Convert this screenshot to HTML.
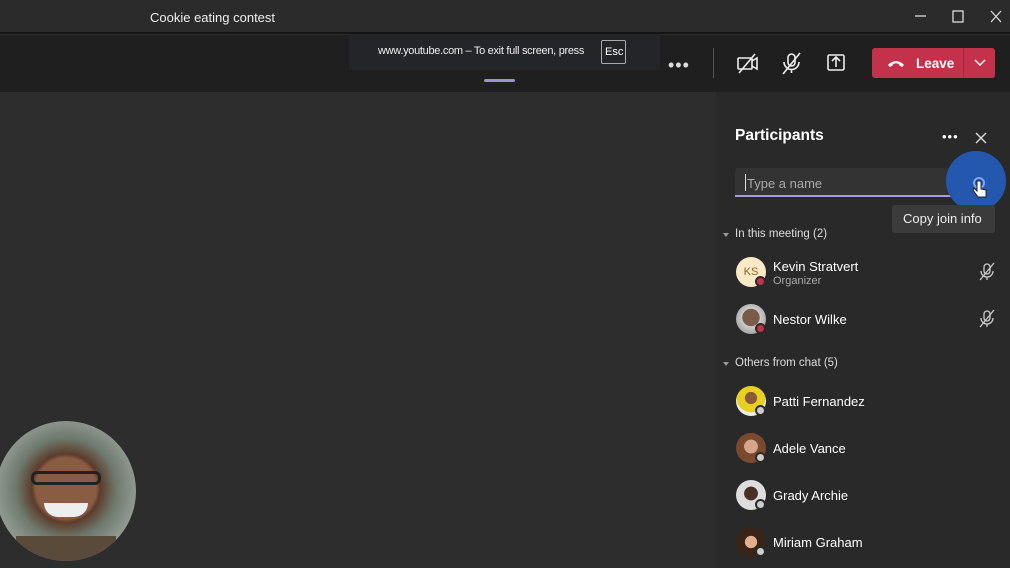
<!DOCTYPE html>
<html><head><meta charset="utf-8"><style>
*{margin:0;padding:0;box-sizing:border-box}
body{width:1010px;height:568px;overflow:hidden;background:#2d2d2d;font-family:"Liberation Sans",sans-serif;color:#fff;position:relative}
.abs{position:absolute}
.title{left:0;top:0;width:1010px;height:34px;background:#2b2b2b;border-bottom:2px solid #141414}
.tool{left:0;top:35px;width:1010px;height:57px;background:#1f1f1f}
.panel{left:716px;top:92px;width:294px;height:476px;background:#292929}
.name{font-size:13px;color:#fff}
.av{width:30px;height:30px;border-radius:50%;position:absolute;left:736px}
.st{position:absolute;width:11px;height:11px;border-radius:50%;border:2px solid #292929;left:755px}
.sec{font-size:11.5px;color:#ddd;position:absolute;left:735px}
.tri{position:absolute;left:723px;width:0;height:0;border-left:3.5px solid transparent;border-right:3.5px solid transparent;border-top:4px solid #999}
</style></head><body>
<div class="abs title"></div>
<div class="abs" style="left:150px;top:10px;font-size:13px;color:#eee">Cookie eating contest</div>
<svg class="abs" style="left:905px;top:6px" width="100" height="22" stroke="#ddd" fill="none" stroke-width="1.3">
<line x1="10" y1="10" x2="21" y2="10"/><rect x="48" y="5" width="10" height="11"/><path d="M86 5l10 11M96 5l-10 11"/></svg>
<div class="abs tool"></div>
<div class="abs" style="left:484px;top:79px;width:31px;height:3px;background:#9a92d8;border-radius:2px"></div>
<div class="abs" style="left:349px;top:34px;width:311px;height:36px;background:#232528"></div>
<div class="abs" style="left:378px;top:45px;font-size:11px;letter-spacing:-0.3px;color:#eee;white-space:nowrap">www.youtube.com – To exit full screen, press</div>
<div class="abs" style="left:601px;top:40px;width:25px;height:24px;border:1px solid #aaa;border-radius:2px;font-size:11px;padding:5px 0 0 3px">Esc</div>
<div class="abs" style="left:668px;top:55px;font-size:18px;letter-spacing:1px;color:#ddd">•••</div>
<div class="abs" style="left:713px;top:48px;width:1px;height:30px;background:#555"></div>
<svg class="abs" style="left:735px;top:50px" width="110" height="28" stroke="#eee" fill="none" stroke-width="1.6">
<rect x="3" y="8" width="14" height="11" rx="1"/><path d="M17 11l5-3v11l-5-3"/><line x1="4" y1="23" x2="20" y2="4"/>
<rect x="53" y="4" width="7" height="12" rx="3.5"/><path d="M49 12a7 7 0 0 0 15 0M56.5 19v4"/><line x1="48" y1="24" x2="65" y2="3"/>
<rect x="93" y="5" width="16" height="15" rx="1.5"/><path d="M101 17v-9M97 11l4-4 4 4"/></svg>
<div class="abs" style="left:872px;top:48px;width:123px;height:30px;background:#c4314b;border-radius:3px"></div>
<div class="abs" style="left:963px;top:48px;width:1px;height:30px;background:#a8283e"></div>
<svg class="abs" style="left:886px;top:56px" width="20" height="14"><path d="M2 9c4-5 12-5 16 0l-2 2-3-2v-1c-2-1-4-1-6 0v1l-3 2z" fill="#fff"/></svg>
<div class="abs" style="left:916px;top:56px;font-size:13.5px;font-weight:bold">Leave</div>
<svg class="abs" style="left:973px;top:58px" width="14" height="10" stroke="#fff" fill="none" stroke-width="1.4"><path d="M2 2l5 5 5-5"/></svg>
<div class="abs panel"></div>
<div class="abs" style="left:735px;top:127px;font-size:15.5px;font-weight:bold">Participants</div>
<div class="abs" style="left:942px;top:129px;font-size:13px;letter-spacing:1px">•••</div>
<svg class="abs" style="left:975px;top:132px" width="12" height="12" stroke="#ddd" stroke-width="1.4"><path d="M1 1l10 10M11 1L1 11"/></svg>
<div class="abs" style="left:735px;top:168px;width:230px;height:29px;background:#333;border-bottom:2px solid #a49ce0;border-radius:3px 3px 0 0"></div>
<div class="abs" style="left:745px;top:174px;width:1px;height:17px;background:#ddd"></div>
<div class="abs" style="left:747px;top:176px;font-size:13px;color:#aaa">Type a name</div>
<div class="abs" style="left:946px;top:151px;width:60px;height:60px;border-radius:50%;background:#2358ae"></div>
<svg class="abs" style="left:969px;top:175px" width="22" height="26"><circle cx="10" cy="8" r="5" stroke="#7fa6f0" stroke-width="2" fill="none"/><path d="M8 6v10l-3-3-1 2 5 7h8v-7l-5-1v-8z" fill="#fff" stroke="#222" stroke-width="1"/></svg>
<div class="abs" style="left:892px;top:205px;width:103px;height:28px;background:#3b3b3b;border-radius:3px;font-size:13px;padding:6px 0 0 11px;color:#eee">Copy join info</div>
<div class="tri" style="top:233px"></div><div class="sec" style="top:228px">In this meeting (2)</div>
<div class="av" style="top:257px;background:#f9e9c6;color:#8a6a1f;font-size:11px;text-align:center;line-height:30px">KS</div>
<div class="st" style="top:276px;background:#c4314b"></div>
<div class="abs name" style="left:773px;top:259px">Kevin Stratvert</div>
<div class="abs" style="left:773px;top:275px;font-size:11px;color:#aaa">Organizer</div>
<div class="av" style="top:304px;background:radial-gradient(circle at 50% 45%,#7a5a48 0 38%,#ccc 40%,#888)"></div>
<div class="st" style="top:323px;background:#c4314b"></div>
<div class="abs name" style="left:773px;top:312px">Nestor Wilke</div>
<svg class="abs" style="left:978px;top:262px" width="18" height="68" stroke="#ccc" fill="none" stroke-width="1.3">
<rect x="6" y="2" width="6" height="10" rx="3"/><path d="M3 9a6 6 0 0 0 12 0M9 15v3"/><line x1="2" y1="18" x2="16" y2="1"/>
<rect x="6" y="49" width="6" height="10" rx="3"/><path d="M3 56a6 6 0 0 0 12 0M9 62v3"/><line x1="2" y1="65" x2="16" y2="48"/></svg>
<div class="tri" style="top:362px"></div><div class="sec" style="top:357px">Others from chat (5)</div>
<div class="av" style="top:386px;background:radial-gradient(circle at 50% 40%,#8a5a3a 0 25%,#e8d020 27% 60%,#eee 62%)"></div><div class="st" style="top:405px;background:#ccc"></div>
<div class="abs name" style="left:773px;top:394px">Patti Fernandez</div>
<div class="av" style="top:433px;background:radial-gradient(circle at 50% 45%,#d6a58a 0 30%,#7a4a30 32%)"></div><div class="st" style="top:452px;background:#ccc"></div>
<div class="abs name" style="left:773px;top:441px">Adele Vance</div>
<div class="av" style="top:480px;background:radial-gradient(circle at 50% 45%,#4a3024 0 30%,#ddd 32%)"></div><div class="st" style="top:499px;background:#ccc"></div>
<div class="abs name" style="left:773px;top:488px">Grady Archie</div>
<div class="av" style="top:527px;background:radial-gradient(circle at 50% 50%,#e0b090 0 28%,#3a2418 30%)"></div><div class="st" style="top:546px;background:#ccc"></div>
<div class="abs name" style="left:773px;top:535px">Miriam Graham</div>
<div class="abs" style="left:-4px;top:421px;width:140px;height:140px;border-radius:50%;background:radial-gradient(circle at 50% 48%,#8a5c44 0 30%,#5c3c2c 34%,#6e7a6e 50%,#9aa29a 75%);overflow:hidden">
<div class="abs" style="left:35px;top:50px;width:70px;height:14px;border:3px solid #222;border-radius:6px"></div>
<div class="abs" style="left:48px;top:82px;width:44px;height:14px;background:#eee;border-radius:0 0 20px 20px"></div>
<div class="abs" style="left:20px;top:115px;width:100px;height:30px;background:#5a4a3a"></div></div>
</body></html>
